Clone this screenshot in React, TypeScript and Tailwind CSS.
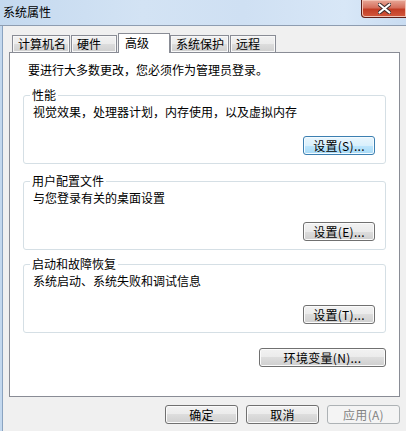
import React from "react";

const font = "font-['Noto_Sans_CJK_SC','Noto_Sans',sans-serif]";

function Button({
  label,
  width,
  variant = "normal",
}: {
  label: string;
  width: string;
  variant?: "normal" | "focus" | "disabled";
}) {
  const styles = {
    normal:
      "border-[#707070] text-black bg-[linear-gradient(#f2f2f2_0%,#ebebeb_50%,#dddddd_50%,#cfcfcf_100%)] shadow-[inset_0_0_0_1px_#fbfbfb]",
    focus:
      "border-[#3c7fb1] text-black bg-[linear-gradient(#eaf6fd_0%,#d9f0fc_50%,#bee6fd_50%,#a7d9f5_100%)] shadow-[inset_0_0_0_1px_#f4fbff]",
    disabled: "border-[#adb2b5] text-[#838383] bg-[#f4f4f4]",
  };
  return (
    <div
      className={`${width} h-[19px] border rounded-[3px] flex items-center justify-center text-[12px] leading-none tracking-[0.3px] ${styles[variant]}`}
    >
      {label}
    </div>
  );
}

function Group({
  title,
  desc,
  button,
  focus,
  mt,
}: {
  title: string;
  desc: string;
  button: string;
  focus?: boolean;
  mt: string;
}) {
  return (
    <fieldset className={`border border-[#d5dfe5] rounded-[3px] pl-[9px] pr-[10px] pb-[8px] ${mt}`}>
      <legend className="-ml-[3px] px-[2px] leading-[16px]">{title}</legend>
      <p className="leading-[16px] mt-px">{desc}</p>
      <div className="flex justify-end mt-[16px]">
        <Button label={button} width="w-[72px]" variant={focus ? "focus" : "normal"} />
      </div>
    </fieldset>
  );
}

export default function App() {
  const tabs = [
    { name: "计算机名", w: "w-[58px]" },
    { name: "硬件", w: "w-[46px]" },
    { name: "高级", w: "w-[52px]", active: true },
    { name: "系统保护", w: "w-[59px]" },
    { name: "远程", w: "w-[46px]" },
  ];

  return (
    <div className={`w-[406px] h-[431px] overflow-hidden flex flex-col bg-[#f0f0f0] text-black text-[12px] ${font}`}>
      {/* title bar */}
      <div className="h-[26px] shrink-0 flex items-start justify-between border-b border-[#8e9db1] bg-[linear-gradient(90deg,#c4d9ef_0%,#d3e3f4_35%,#cfe0f3_60%,#d8e7f7_85%,#c9dcf1_100%)]">
        <span className="ml-[3px] mt-[4px] leading-[16px] text-[12px]">系统属性</span>
        <div className="w-[46px] h-[18px] mr-[-1px] rounded-bl-[4px] border border-t-0 border-[#5e1f18] bg-[linear-gradient(#e8a898_0%,#d56f5c_45%,#c23d25_55%,#d3583d_100%)] shadow-[inset_0_0_0_1px_#f2c2b4] flex items-center justify-center">
          <svg width="13" height="11" viewBox="0 0 13 11">
            <path
              d="M1.5 1.5 L11.5 9.5 M11.5 1.5 L1.5 9.5"
              stroke="#3a2a2a"
              strokeWidth="4"
              strokeLinecap="round"
            />
            <path
              d="M1.5 1.5 L11.5 9.5 M11.5 1.5 L1.5 9.5"
              stroke="#ffffff"
              strokeWidth="2.2"
              strokeLinecap="round"
            />
          </svg>
        </div>
      </div>

      <div className="flex flex-1">
        {/* left frame */}
        <div className="w-[3px] shrink-0 bg-[#c3d8ee] border-r border-[#8aa3c0]" />

        <div className="flex-1 flex flex-col">
          {/* tabs */}
          <div className="flex items-end ml-[9px] mt-[7px] h-[19px] relative z-10">
            {tabs.map((t) =>
              t.active ? (
                <div
                  key={t.name}
                  className={`${t.w} h-[20px] -mb-px bg-white border border-b-0 border-[#898c95] pl-[6px] leading-[17px]`}
                >
                  {t.name}
                </div>
              ) : (
                <div
                  key={t.name}
                  className={`${t.w} h-[17px] border border-b-0 border-[#898c95] bg-[linear-gradient(#f2f2f2_0%,#ebebeb_50%,#dddddd_50%,#cfcfcf_100%)] shadow-[inset_0_0_0_1px_#f8f8f8] pl-[5px] leading-[16px] mr-px`}
                >
                  {t.name}
                </div>
              )
            )}
          </div>

          {/* panel */}
          <div className="ml-[6px] w-[391px] h-[345px] bg-white border border-[#898c95] pt-[9px] px-[13px] flex flex-col">
            <p className="pl-[5px] leading-[16px]">要进行大多数更改，您必须作为管理员登录。</p>
            <Group
              title="性能"
              desc="视觉效果，处理器计划，内存使用，以及虚拟内存"
              button="设置(S)..."
              focus
              mt="mt-[9px]"
            />
            <Group title="用户配置文件" desc="与您登录有关的桌面设置" button="设置(E)..." mt="mt-[9px]" />
            <Group title="启动和故障恢复" desc="系统启动、系统失败和调试信息" button="设置(T)..." mt="mt-[6px]" />
            <div className="flex justify-end mt-[15px]">
              <Button label="环境变量(N)..." width="w-[127px]" />
            </div>
          </div>

          {/* bottom buttons */}
          <div className="flex justify-end gap-[8px] mt-[8px] w-[397px]">
            <Button label="确定" width="w-[73px]" />
            <Button label="取消" width="w-[73px]" />
            <Button label="应用(A)" width="w-[73px]" variant="disabled" />
          </div>
        </div>
      </div>
    </div>
  );
}
